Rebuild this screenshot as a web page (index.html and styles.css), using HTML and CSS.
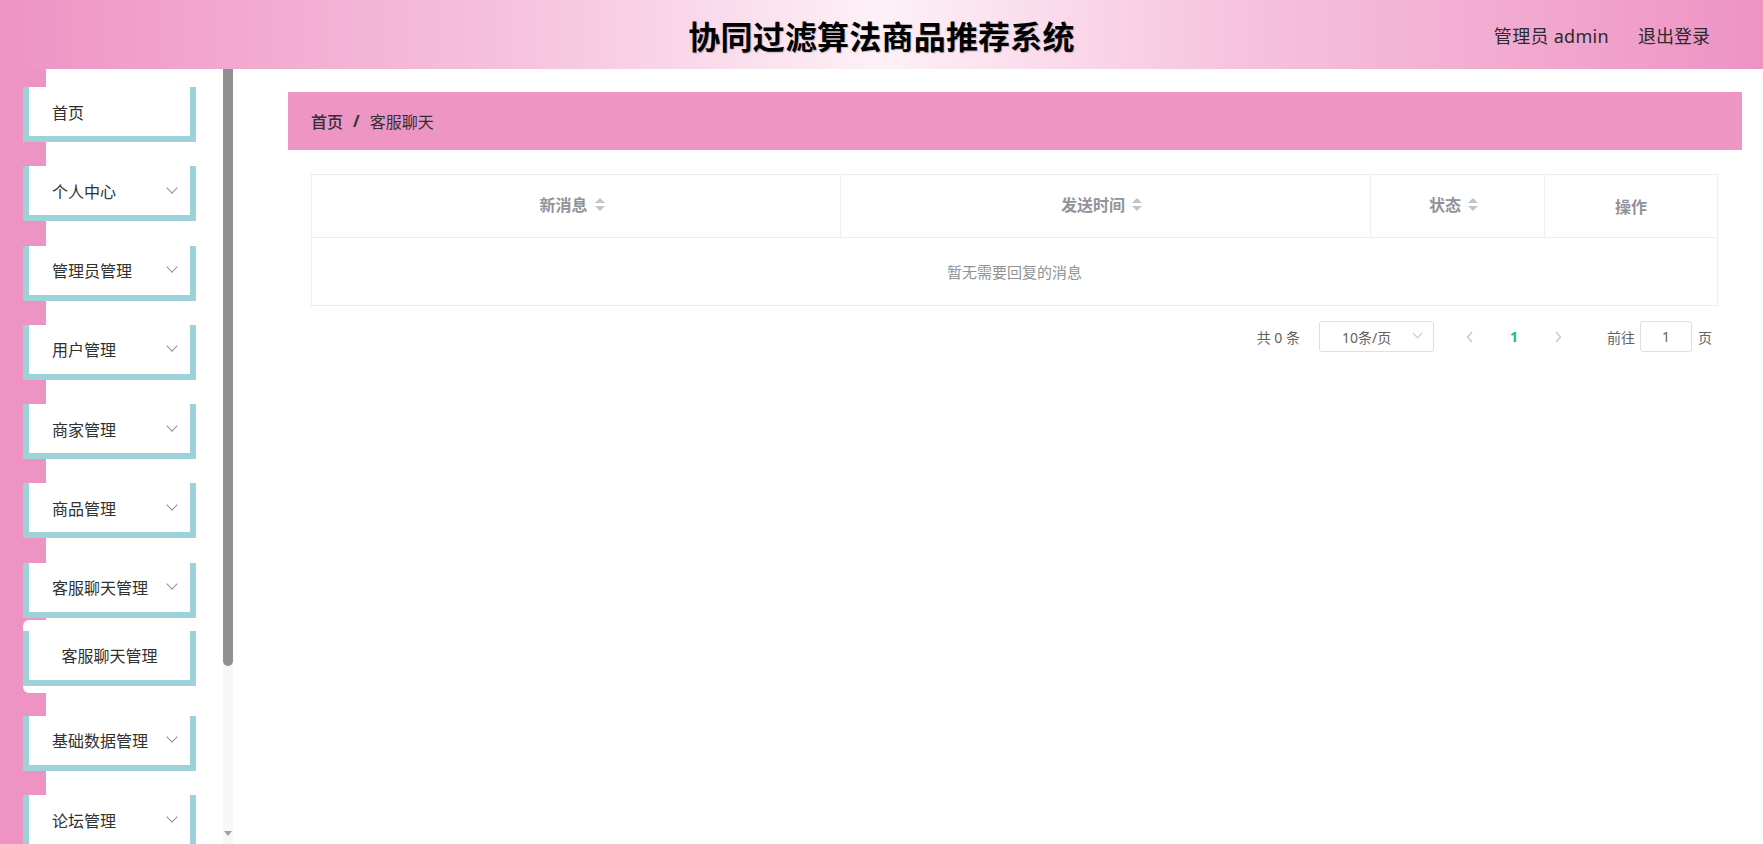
FILE: index.html
```html
<!DOCTYPE html>
<html lang="zh-CN">
<head>
<meta charset="utf-8"/>
<meta content="width=device-width, initial-scale=1.0" name="viewport"/>
<title>协同过滤算法商品推荐系统</title>
<link rel="stylesheet" href="styles.css">
</head>
<body>
<header class="topbar">
  <div class="topbar-side"></div>
  <h1 class="title">协同过滤算法商品推荐系统</h1>
  <nav class="user-nav">
    <span>管理员 admin</span>
    <a href="#">退出登录</a>
  </nav>
</header>

<div class="layout">
  <aside class="sidebar">
    <ul class="menu">
      <li class="menu-item"><span>首页</span></li>
      <li class="menu-item"><span>个人中心</span><i class="arrow"></i></li>
      <li class="menu-item"><span>管理员管理</span><i class="arrow"></i></li>
      <li class="menu-item"><span>用户管理</span><i class="arrow"></i></li>
      <li class="menu-item"><span>商家管理</span><i class="arrow"></i></li>
      <li class="menu-item"><span>商品管理</span><i class="arrow"></i></li>
      <li class="menu-group">
        <div class="menu-item open"><span>客服聊天管理</span><i class="arrow"></i></div>
        <ul class="submenu">
          <li class="menu-item sub">客服聊天管理</li>
        </ul>
      </li>
      <li class="menu-item"><span>基础数据管理</span><i class="arrow"></i></li>
      <li class="menu-item"><span>论坛管理</span><i class="arrow"></i></li>
    </ul>
    <div class="scrollbar">
      <div class="thumb"></div>
      <div class="track"></div>
      <div class="scroll-btn"><span class="tri"></span></div>
    </div>
  </aside>

  <main class="main">
    <div class="breadcrumb">
      <span class="crumb first">首页</span>
      <span class="sep">/</span>
      <span class="crumb">客服聊天</span>
    </div>

    <div class="table-wrap">
      <table class="data-table">
        <colgroup>
          <col class="c-msg">
          <col class="c-time">
          <col class="c-state">
          <col class="c-op">
        </colgroup>
        <thead>
          <tr>
            <th><span class="th-label">新消息<span class="caret"><i class="up"></i><i class="down"></i></span></span></th>
            <th><span class="th-label">发送时间<span class="caret"><i class="up"></i><i class="down"></i></span></span></th>
            <th><span class="th-label">状态<span class="caret"><i class="up"></i><i class="down"></i></span></span></th>
            <th><span class="th-label op">操作</span></th>
          </tr>
        </thead>
        <tbody>
          <tr><td class="empty" colspan="4">暂无需要回复的消息</td></tr>
        </tbody>
      </table>
    </div>

    <div class="pagination">
      <span class="total">共 0 条</span>
      <div class="size-select">
        <span>10条/页</span>
        <i class="arrow small"></i>
      </div>
      <button class="pg-btn">
        <svg width="8" height="12" viewBox="0 0 8 12"><path d="M6 1 L1.5 6 L6 11" fill="none" stroke="#c0c4cc" stroke-width="1.2"/></svg>
      </button>
      <span class="pg-num active">1</span>
      <button class="pg-btn">
        <svg width="8" height="12" viewBox="0 0 8 12"><path d="M2 1 L6.5 6 L2 11" fill="none" stroke="#c0c4cc" stroke-width="1.2"/></svg>
      </button>
      <span class="jump">前往</span>
      <div class="jump-input">1</div>
      <span class="jump-end">页</span>
    </div>
  </main>
</div>
</body>
</html>
```

FILE: styles.css
```css
html, body {
  margin: 0;
  height: 100%;
}
body {
  font-family: "Noto Sans", "Noto Sans CJK SC", sans-serif;
  color: #303133;
  background: #fff;
  overflow: hidden;
}

/* top bar */
.topbar {
  height: 69px;
  display: grid;
  grid-template-columns: 1fr auto 1fr;
  align-items: center;
  background: linear-gradient(90deg, #ee93c4 0%, #f6c3de 30%, #fdf1f7 50%, #f6c3de 70%, #ee93c4 100%);
}
.title {
  margin: 0;
  font-family: "Noto Sans CJK SC", sans-serif;
  font-size: 32px;
  font-weight: 700;
  color: #000;
  letter-spacing: 0.2px;
  text-shadow: 1px 1px 1px rgba(0, 0, 0, 0.2);
}
.user-nav {
  justify-self: end;
  display: flex;
  gap: 29px;
  padding-right: 53px;
  font-size: 18px;
  color: #2b2b2b;
}
.user-nav span {
  letter-spacing: 0.3px;
}
.user-nav a {
  color: #2b2b2b;
  text-decoration: none;
}

/* page layout */
.layout {
  display: flex;
  height: calc(100vh - 69px);
}

/* sidebar */
.sidebar {
  width: 236px;
  flex: none;
  display: flex;
  overflow: hidden;
  background: linear-gradient(90deg, #ee94c4 46px, #fff 46px);
}
.menu {
  width: 223px;
  flex: none;
  list-style: none;
  margin: 0;
  padding: 18px 0 0;
}
.menu-item {
  box-sizing: border-box;
  width: 173px;
  height: 55px;
  margin: 0 0 24.3px 23px;
  padding: 0 14px 0 23px;
  display: flex;
  align-items: center;
  justify-content: space-between;
  background: #fff;
  border: 6px solid #9dd3d8;
  border-top: none;
  font-size: 16px;
  color: #303133;
}
.menu-item.open {
  margin-bottom: 2px;
}
.menu-group .submenu {
  list-style: none;
  margin: 0 0 23px 23px;
  padding: 11px 0 7px;
  background: #fff;
  border-radius: 6px;
}
.menu-item.sub {
  margin: 0;
  padding: 0;
  justify-content: center;
}
.arrow {
  width: 7px;
  height: 7px;
  border-right: 1px solid #8f9298;
  border-bottom: 1px solid #8f9298;
  transform: translateY(-3px) rotate(45deg);
}

/* fake scrollbar of the menu */
.scrollbar {
  width: 10px;
  flex: none;
  display: flex;
  flex-direction: column;
  background: #f7f7f7;
}
.thumb {
  height: 597px;
  background: #8f8f8f;
  border-radius: 0 0 5px 5px;
}
.track {
  flex: 1;
}
.scroll-btn {
  height: 20px;
  display: flex;
  justify-content: center;
}
.tri {
  width: 0;
  height: 0;
  margin-top: 7px;
  border-left: 4px solid transparent;
  border-right: 4px solid transparent;
  border-top: 5px solid #a3a3a3;
}

/* main */
.main {
  flex: 1;
  padding: 23px 22px 0 52px;
}
.breadcrumb {
  height: 58px;
  display: flex;
  align-items: center;
  padding-left: 23px;
  background: #ef95c4;
  font-size: 16px;
  color: #303133;
}
.crumb.first {
  font-weight: 500;
}
.sep {
  margin: 0 10px;
  font-weight: 700;
  color: #303133;
}

.table-wrap {
  margin: 24px 24px 0 23px;
}
.data-table {
  width: 100%;
  border-collapse: collapse;
  table-layout: fixed;
  border: 1px solid #ebeef5;
}
.c-msg { width: 529px; }
.c-time { width: 530px; }
.c-state { width: 174px; }
.c-op { width: 173px; }
.data-table th {
  height: 58px;
  padding: 0 0 4px;
  border-right: 1px solid #ebeef5;
  border-bottom: 1px solid #ebeef5;
  color: #909399;
  font-size: 16px;
  font-weight: 700;
  text-align: center;
}
.th-label {
  display: inline-flex;
  align-items: center;
  gap: 7px;
  padding-right: 8px;
}
.th-label.op {
  padding: 4px 0 0;
}
.caret {
  display: inline-flex;
  flex-direction: column;
  gap: 3px;
}
.caret i {
  width: 0;
  height: 0;
  border-left: 5px solid transparent;
  border-right: 5px solid transparent;
}
.caret .up {
  border-bottom: 5px solid #c0c4cc;
}
.caret .down {
  border-top: 5px solid #c0c4cc;
}
.data-table td.empty {
  height: 67px;
  padding: 0;
  text-align: center;
  color: #909399;
  font-size: 15px;
}

/* pagination */
.pagination {
  display: flex;
  justify-content: flex-end;
  align-items: center;
  margin: 15px 30px 0 0;
  font-size: 14px;
  color: #606266;
}
.total {
  margin-right: 19px;
}
.size-select {
  box-sizing: border-box;
  width: 115px;
  height: 31px;
  display: flex;
  align-items: center;
  justify-content: space-between;
  padding: 0 12px 0 22px;
  border: 1px solid #dcdfe6;
  border-radius: 3px;
  margin-right: 14px;
}
.arrow.small {
  width: 6px;
  height: 6px;
  border-color: #c0c4cc;
}
.pg-btn {
  width: 36px;
  height: 31px;
  margin: 0 4px;
  padding: 0;
  border: none;
  background: none;
  display: flex;
  align-items: center;
  justify-content: center;
}
.pg-num {
  width: 36px;
  margin: 0 4px;
  text-align: center;
  font-weight: 700;
  color: #1fb88a;
}
.jump {
  margin-left: 27px;
  margin-right: 5px;
}
.jump-input {
  box-sizing: border-box;
  width: 52px;
  height: 31px;
  display: flex;
  align-items: center;
  justify-content: center;
  border: 1px solid #dcdfe6;
  border-radius: 3px;
  margin-right: 6px;
}
```
